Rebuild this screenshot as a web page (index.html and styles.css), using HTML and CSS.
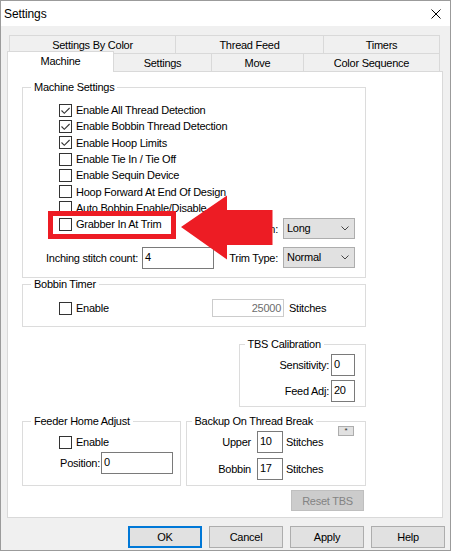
FILE: index.html
```html
<!DOCTYPE html>
<html>
<head>
<meta charset="utf-8">
<title>Settings</title>
<link rel="stylesheet" href="styles.css">
</head>
<body>
<div class="window">
  <div class="titlebar">
    <span class="title">Settings</span>
    <svg class="close" viewBox="0 0 10 10"><path d="M0.5 0.5 L9.5 9.5 M9.5 0.5 L0.5 9.5" stroke="#000" stroke-width="1" fill="none"/></svg>
  </div>
  <div class="tabs">
    <div class="tab-row back">
      <div class="tab w-sbc">Settings By Color</div>
      <div class="tab w-tf">Thread Feed</div>
      <div class="tab w-tm">Timers</div>
    </div>
    <div class="tab-row front">
      <div class="tab active w-m">Machine</div>
      <div class="tab w-s">Settings</div>
      <div class="tab w-mv">Move</div>
      <div class="tab w-cs">Color Sequence</div>
    </div>
  </div>
  <div class="panel">
    <div class="col">
      <fieldset class="group machine">
        <legend>Machine Settings</legend>
        <div class="checklist">
          <div class="cb"><span class="box"><svg viewBox="0 0 11 11"><path d="M1.5 5.5 L4.3 8.3 L9.6 3" stroke="#333" stroke-width="1.1" fill="none"/></svg></span>Enable All Thread Detection</div>
          <div class="cb"><span class="box"><svg viewBox="0 0 11 11"><path d="M1.5 5.5 L4.3 8.3 L9.6 3" stroke="#333" stroke-width="1.1" fill="none"/></svg></span>Enable Bobbin Thread Detection</div>
          <div class="cb"><span class="box"><svg viewBox="0 0 11 11"><path d="M1.5 5.5 L4.3 8.3 L9.6 3" stroke="#333" stroke-width="1.1" fill="none"/></svg></span>Enable Hoop Limits</div>
          <div class="cb"><span class="box"></span>Enable Tie In / Tie Off</div>
          <div class="cb"><span class="box"></span>Enable Sequin Device</div>
          <div class="cb"><span class="box"></span>Hoop Forward At End Of Design</div>
          <div class="cb"><span class="box"></span>Auto Bobbin Enable/Disable</div>
        </div>
        <div class="opt-row r1">
          <div class="cb"><span class="box"></span>Grabber In At Trim</div>
          <div class="field">
            <span class="field-label">Trim Option:</span>
            <div class="combo"><span>Long</span><svg class="chev" viewBox="0 0 8 5"><path d="M0.5 0.5 L4 4 L7.5 0.5" stroke="#444" stroke-width="1" fill="none"/></svg></div>
          </div>
        </div>
        <div class="opt-row r2">
          <div class="inch">
            <span class="inch-label">Inching stitch count:</span>
            <div class="input w72">4</div>
          </div>
          <div class="field">
            <span class="field-label">Trim Type:</span>
            <div class="combo"><span>Normal</span><svg class="chev" viewBox="0 0 8 5"><path d="M0.5 0.5 L4 4 L7.5 0.5" stroke="#444" stroke-width="1" fill="none"/></svg></div>
          </div>
        </div>
      </fieldset>

      <fieldset class="group bobbin">
        <legend>Bobbin Timer</legend>
        <div class="bt-row">
          <div class="cb"><span class="box"></span>Enable</div>
          <div class="input disabled">25000</div>
          <span class="unit">Stitches</span>
        </div>
      </fieldset>

      <fieldset class="group tbs">
        <legend>TBS Calibration</legend>
        <div class="tbs-grid">
          <span class="lbl">Sensitivity:</span>
          <div class="input">0</div>
          <span class="lbl">Feed Adj:</span>
          <div class="input">20</div>
        </div>
      </fieldset>

      <div class="bottom">
        <fieldset class="group feeder">
          <legend>Feeder Home Adjust</legend>
          <div class="cb"><span class="box"></span>Enable</div>
          <div class="pos-row">
            <span class="lbl">Position:</span>
            <div class="input w72">0</div>
          </div>
        </fieldset>
        <fieldset class="group backup">
          <legend>Backup On Thread Break</legend>
          <div class="bk-rows">
            <div class="bk-row">
              <span class="lbl">Upper</span>
              <div class="input">10</div>
              <span class="unit">Stitches</span>
              <div class="star">*</div>
            </div>
            <div class="bk-row">
              <span class="lbl">Bobbin</span>
              <div class="input">17</div>
              <span class="unit">Stitches</span>
            </div>
          </div>
        </fieldset>
      </div>

      <div class="reset">Reset TBS</div>
    </div>
  </div>
  <div class="buttons">
    <div class="btn default">OK</div>
    <div class="btn">Cancel</div>
    <div class="btn">Apply</div>
    <div class="btn">Help</div>
  </div>

  <div class="highlight"></div>
  <svg class="arrow" viewBox="0 0 451 551"><polygon points="181,227 227,195.5 227,210 272.5,210 272.5,245 227,245 227,259.5" fill="#ed1c24"/></svg>
</div>
</body>
</html>
```
FILE: styles.css
```css
* { box-sizing: border-box; }
html, body { margin: 0; padding: 0; }
body {
  width: 451px;
  height: 551px;
  overflow: hidden;
  font-family: "Liberation Sans", Arial, sans-serif;
  font-size: 11px;
  letter-spacing: -0.25px;
  color: #000;
  background: #fff;
}
.window {
  position: relative;
  width: 451px;
  height: 551px;
  border: 1px solid #9b9b9b;
  background: #f0f0f0;
}
.titlebar {
  height: 25px;
  background: #fff;
  display: flex;
  align-items: center;
  justify-content: space-between;
  padding: 0 9px 0 3px;
}
.title { font-size: 12px; letter-spacing: -0.1px; }
.close { width: 10px; height: 10px; display: block; }

/* tabs */
.tabs { margin: 9px 0 0 6px; }
.tab-row { display: flex; height: 18px; }
.tab-row.back { padding-left: 2px; }
.tab {
  height: 18px;
  border: 1px solid #d9d9d9;
  border-bottom: none;
  display: flex;
  align-items: center;
  justify-content: center;
  margin-left: -1px;
  background: #f0f0f0;
  white-space: nowrap;
}
.tab:first-child { margin-left: 0; }
.tab.active {
  height: 21px;
  margin-top: -2px;
  background: #fff;
  position: relative;
  z-index: 2;
  padding-bottom: 2px;
}
.w-sbc { width: 167px; }
.w-tf { width: 149px; }
.w-tm { width: 117px; }
.w-m { width: 107px; }
.w-s { width: 99px; }
.w-mv { width: 93px; }
.w-cs { width: 137px; }

.panel {
  margin-left: 6px;
  width: 436px;
  height: 447px;
  border: 1px solid #d9d9d9;
  background: #fff;
  padding: 9px 0 0 14px;
}
.col { width: 344px; }

/* group boxes */
fieldset.group {
  margin: 0;
  padding: 0;
  border: 1px solid #dcdcdc;
  min-width: 0;
}
fieldset.group > legend {
  padding: 0 3px;
  margin-left: 8px;
  line-height: 13px;
  height: 13px;
  white-space: nowrap;
}
fieldset.tbs > legend,
fieldset.backup > legend { margin-left: 4.5px; }

/* checkbox */
.cb {
  display: flex;
  align-items: center;
  height: 16.3px;
  white-space: nowrap;
}
.box {
  width: 13px;
  height: 13px;
  border: 1px solid #333;
  background: #fff;
  margin-right: 4px;
  flex: none;
}
.box svg { display: block; width: 11px; height: 11px; }

/* inputs */
.input {
  height: 22px;
  border: 1px solid #7a7a7a;
  background: #fff;
  display: flex;
  align-items: center;
  padding: 0 0 2px 2px;
  white-space: nowrap;
}
.w72 { width: 72px; }
.input.disabled {
  width: 72px;
  height: 18px;
  border-color: #cccccc;
  justify-content: flex-end;
  padding: 0 2px 1px 0;
  color: #6d6d6d;
}
.combo {
  width: 72px;
  height: 21px;
  border: 1px solid #adadad;
  background: #e1e1e1;
  display: flex;
  align-items: center;
  justify-content: space-between;
  padding: 0 5px 1px 3px;
}
.chev { width: 8px; height: 5px; display: block; }

/* machine settings */
.checklist { padding: 8px 0 0 36px; }
.opt-row { display: flex; align-items: flex-start; padding-right: 10px; }
.opt-row.r1 { height: 23px; }
.opt-row.r1 .cb { margin-left: 36px; }
.opt-row.r2 { margin: 8px 0 8px; }
.field { display: flex; align-items: center; margin-left: auto; white-space: nowrap; }
.opt-row.r1 .field { margin-top: 2px; }
.field-label { margin-right: 5px; }
.inch { display: flex; align-items: center; }
.inch-label { width: 115px; text-align: right; margin-right: 4px; white-space: nowrap; }

/* bobbin timer */
.bt-row {
  display: grid;
  grid-template-columns: 153px 72px auto;
  align-items: center;
  padding: 8px 0 9px 36px;
}
.unit { margin-left: 5px; white-space: nowrap; }

/* tbs */
fieldset.tbs { width: 127px; margin: 11px 0 0 auto; }
.tbs-grid {
  display: grid;
  grid-template-columns: 1fr 24px;
  column-gap: 2px;
  row-gap: 4px;
  align-items: center;
  padding: 3px 10px 4px 0;
}
.lbl { text-align: right; white-space: nowrap; }

/* bottom groups */
.bottom { display: flex; gap: 5px; margin-top: 8px; }
fieldset.feeder { width: 159px; }
fieldset.backup { width: 180px; }
.feeder .cb { margin: 6px 0 0 36px; }
.pos-row { display: flex; align-items: center; margin-top: 2px; padding-bottom: 10px; }
.pos-row .lbl { width: 77px; margin-right: 1px; }

.bk-rows { display: flex; flex-direction: column; gap: 5px; padding: 3px 11px 5px 0; }
.bk-row { display: flex; align-items: center; height: 22px; }
.bk-row .lbl { width: 64px; margin-right: 6px; }
.bk-row .input { width: 26px; }
.bk-row .unit { margin-left: 3px; }
.star {
  margin-left: auto;
  align-self: flex-start;
  margin-top: -5px;
  width: 16px;
  height: 10px;
  border: 1px solid #adadad;
  background: #e1e1e1;
  font-size: 8px;
  line-height: 8px;
  text-align: center;
  color: #333;
}

.reset {
  width: 73px;
  height: 21px;
  margin: 4px 2px 0 auto;
  background: #cccccc;
  border: 1px solid #bfbfbf;
  color: #838383;
  display: flex;
  align-items: center;
  justify-content: center;
}

/* dialog buttons */
.buttons {
  display: flex;
  justify-content: flex-end;
  gap: 7px;
  margin-top: 8px;
  padding-right: 5px;
}
.btn {
  width: 74px;
  height: 22px;
  border: 1px solid #adadad;
  background: #e1e1e1;
  display: flex;
  align-items: center;
  justify-content: center;
}
.btn.default {
  border-color: #0078d7;
  box-shadow: inset 0 0 0 1px #0078d7;
}

/* annotation overlay */
.highlight {
  position: absolute;
  left: 47px;
  top: 210px;
  width: 128px;
  height: 28px;
  border: 5px solid #ed1c24;
}
.arrow {
  position: absolute;
  left: -1px;
  top: -1px;
  width: 451px;
  height: 551px;
  pointer-events: none;
}
```
